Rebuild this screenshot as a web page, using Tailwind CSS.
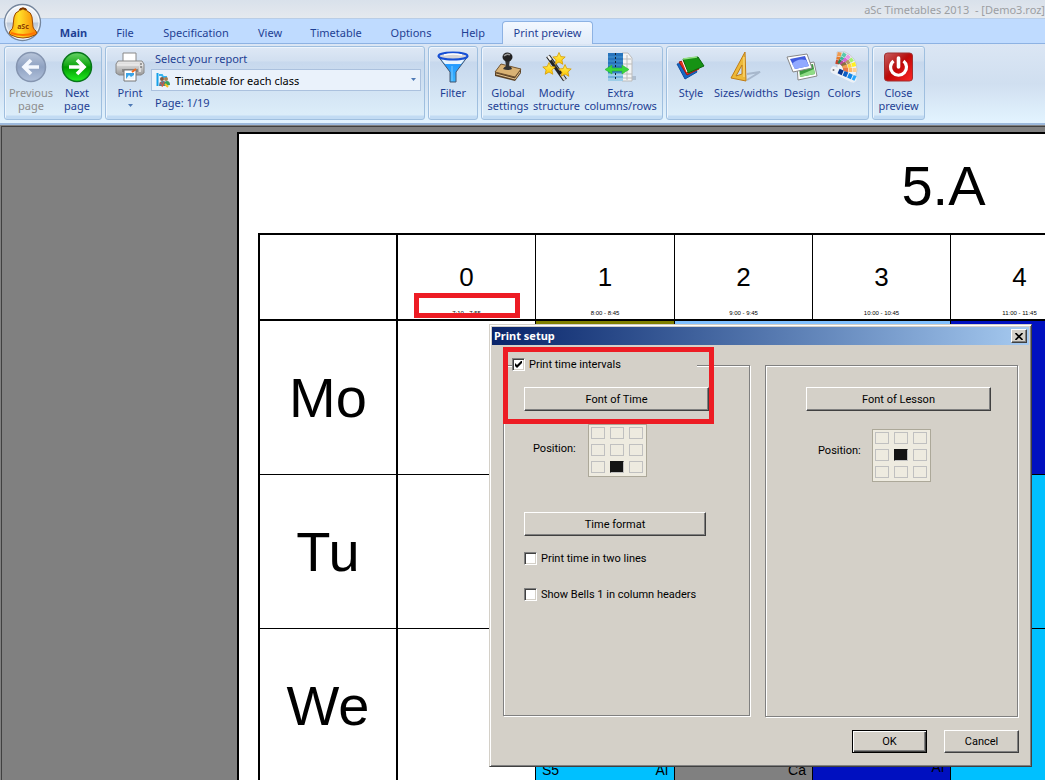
<!DOCTYPE html>
<html lang="en">
<head>
<meta charset="utf-8">
<title>aSc Timetables 2013</title>
<script src="https://cdn.jsdelivr.net/npm/@tailwindcss/browser@4"></script>
</head>
<body class="h-screen overflow-hidden flex flex-col bg-[#808080] font-['Noto_Sans',sans-serif] text-[11px] leading-[13px] text-[#1e3f94]">

<header class="relative shrink-0">
  <div class="h-[19px] bg-linear-to-b from-[#d9e1eb] to-[#e5e9ee] border-b border-[#b9cde6] flex justify-end items-center">
    <h1 class="shrink-0 whitespace-pre text-[#9c9fa3]">aSc Timetables 2013  - [Demo3.roz]</h1>
  </div>
  <nav class="h-[25px] bg-[#bfdbff] border-b border-[#8db2e3] flex pl-[50px] relative" aria-label="Ribbon tabs">
    <a href="#" class="w-[47px] text-center leading-[28px] font-bold">Main</a>
    <a href="#" class="w-[56px] text-center leading-[28px]">File</a>
    <a href="#" class="w-[86px] text-center leading-[28px]">Specification</a>
    <a href="#" class="w-[62px] text-center leading-[28px]">View</a>
    <a href="#" class="w-[70px] text-center leading-[28px]">Timetable</a>
    <a href="#" class="w-[80px] text-center leading-[28px]">Options</a>
    <a href="#" class="w-[44px] text-center leading-[28px]">Help</a>
    <a href="#" class="w-[91px] ml-[7px] mt-[2px] h-[23px] text-center leading-[22px] rounded-t border border-b-0 border-[#8db2e3] bg-linear-to-b from-[#f3f8ff] to-[#e1ebf8]">Print preview</a>
  </nav>
  <button aria-label="Application menu" class="absolute left-[3px] top-[3px]">
    <svg width="40" height="40" viewBox="0 0 40 40">
      <defs>
        <linearGradient id="orb" x2="0" y2="1"><stop stop-color="#f7f9fc"/><stop offset=".48" stop-color="#dfe5ed"/><stop offset=".52" stop-color="#bcc8d8"/><stop offset="1" stop-color="#f2f7ff"/></linearGradient>
        <linearGradient id="bell"><stop stop-color="#ffa000"/><stop offset=".35" stop-color="#ffe02a"/><stop offset="1" stop-color="#f88000"/></linearGradient>
      </defs>
      <circle cx="19.500" cy="19.500" r="18" fill="url(#orb)" stroke="#75869d" stroke-width="1.300"/>
      <circle cx="19.500" cy="19.500" r="16.500" fill="none" stroke="#fff" opacity=".8"/>
      <path d="M16 8q0-3 4-3t4 3q4 1 5 6l1 10q1 3 3 4 2 3-1 4-6 3-12 3T8 32q-3-1-1-4 3-2 3-5l1-9q1-5 5-6z" fill="url(#bell)" stroke="#9b4a00"/>
      <path d="M8 30q12 4 24 0" fill="none" stroke="#ff7200" stroke-width="2"/>
      <path d="M17 7q3-3 6 0" stroke="#7c3500" stroke-width="2" fill="none"/>
      <text x="20" y="26" text-anchor="middle" font-family="Noto Sans" font-weight="bold" font-size="7" fill="#8c3c00">aSc</text>
    </svg>
  </button>

  <div class="h-[81px] pt-[2px] pl-[4px] pb-[3px] bg-linear-to-b from-[#dbe6f4] via-[#d0dff0] to-[#e3f4ff] border-b-2 border-[#9cb9dc] flex gap-[3px] items-stretch">

    <section class="w-[98px] rounded-[3px] border border-[#9fbfdf] bg-[linear-gradient(#dee8f5_0,#d1dff0_14px,#c7d8ed_15px,#dcedf9_68px,#c2dbf3_69px)] shadow-[inset_1px_1px_#eef5fd] flex pt-[3px]">
      <button class="w-[52px] flex flex-col items-center text-[#8d8d8d]">
        <svg width="32" height="34" viewBox="0 0 32 34"><defs><linearGradient id="pg" x2="0" y2="1"><stop stop-color="#b8c5da"/><stop offset=".5" stop-color="#8fa2c2"/><stop offset="1" stop-color="#b2c2dc"/></linearGradient></defs><circle cx="16" cy="17" r="14.500" fill="url(#pg)" stroke="#8595b0" stroke-width="1.500"/><path d="M24 17H9m7-7-7 7 7 7" fill="none" stroke="#f4f8fe" stroke-width="3.600"/></svg>
        <span class="mt-[2px]">Previous<br>page</span>
      </button>
      <button class="w-[40px] flex flex-col items-center">
        <svg width="32" height="34" viewBox="0 0 32 34"><defs><linearGradient id="ng" x2="0" y2="1"><stop stop-color="#66d366"/><stop offset=".45" stop-color="#12a712"/><stop offset=".5" stop-color="#009a00"/><stop offset="1" stop-color="#24ef24"/></linearGradient></defs><circle cx="16" cy="17" r="14.500" fill="url(#ng)" stroke="#08751b" stroke-width="1.500"/><path d="M8 17h15m-7-7 7 7-7 7" fill="none" stroke="#fff" stroke-width="3.600"/></svg>
        <span class="mt-[2px]">Next<br>page</span>
      </button>
    </section>

    <section class="w-[320px] rounded-[3px] border border-[#9fbfdf] bg-[linear-gradient(#dee8f5_0,#d1dff0_14px,#c7d8ed_15px,#dcedf9_68px,#c2dbf3_69px)] shadow-[inset_1px_1px_#eef5fd] flex pt-[3px]">
      <button class="w-[48px] shrink-0 flex flex-col items-center">
        <svg width="32" height="34" viewBox="0 0 32 34"><defs><linearGradient id="pr" x2="0" y2="1"><stop stop-color="#eee"/><stop offset=".5" stop-color="#c4c4c4"/><stop offset="1" stop-color="#999"/></linearGradient></defs><path d="M9 3h13v9H9z" fill="#fff" stroke="#888"/><path d="M4 11h24l2 3v9l-3 2H5l-3-2v-9z" fill="url(#pr)" stroke="#888"/><path d="M3 15h26" stroke="#f5f5f5"/><path d="M8 19h16v3H8z" fill="#888"/><path d="M10 20h12v11H10z" fill="#fff" stroke="#777"/><path d="M12 23h8v6h-8z" fill="#3ba5e8"/><path d="m12 29 3-4 2 2 3-2v4z" fill="#e8f7ff"/><path d="m18 22 4-3" stroke="#f06a20" stroke-width="2"/><path d="M26 12v10" stroke="#ddd" stroke-width="2"/><path d="M26 14h2m-2 3h2" stroke="#555"/></svg>
        <span class="mt-[2px]">Print</span>
        <svg class="mt-[5px]" width="5" height="3" viewBox="0 0 5 3"><path d="M0 0h5L2.500 3z" fill="#4e79b5"/></svg>
      </button>
      <div class="flex flex-col w-[270px] -ml-[3px]">
        <label for="report" class="ml-[4px] mt-[2px]">Select your report</label>
        <div class="relative mt-[4px] h-[22px]">
          <select id="report" class="appearance-none block w-full h-[22px] pl-[23px] bg-[#eaf2fb] border border-[#abc1de] text-black"><option>Timetable for each class</option></select>
          <svg class="absolute left-[5px] top-[3px] pointer-events-none" width="15" height="16" viewBox="0 0 15 16"><path d="M1.500 1v13" stroke="#15a0e8" stroke-width="2"/><path d="M3 3h3l1 2h3v3" fill="none" stroke="#35b5ef" stroke-width="2"/><circle cx="6" cy="7" r="2" fill="#855a40"/><circle cx="10" cy="7" r="2" fill="#a98050"/><path d="M3 14q0-5 4-5t3 5z" fill="#678"/><path d="M8 14q0-5 3-5t3 4z" fill="#35a060"/><path d="M4 10l3 4m1-4-2 5" stroke="#e25238"/><path d="M9 12l3 3" stroke="#ffc020" stroke-width="2"/></svg>
          <svg class="absolute right-[5px] top-[9px] pointer-events-none" width="5" height="3" viewBox="0 0 5 3"><path d="M0 0h5L2.500 3z" fill="#4e79b5"/></svg>
        </div>
        <p class="ml-[4px] mt-[5px]">Page: 1/19</p>
      </div>
    </section>

    <section class="w-[50px] rounded-[3px] border border-[#9fbfdf] bg-[linear-gradient(#dee8f5_0,#d1dff0_14px,#c7d8ed_15px,#dcedf9_68px,#c2dbf3_69px)] shadow-[inset_1px_1px_#eef5fd] flex pt-[3px]">
      <button class="w-full flex flex-col items-center">
        <svg width="32" height="34" viewBox="0 0 32 34"><defs><linearGradient id="fu" x2="0" y2="1"><stop stop-color="#a8d9ff"/><stop offset=".35" stop-color="#239aff"/><stop offset="1" stop-color="#38b6ff"/></linearGradient></defs><path d="M1 6l12 16v10h6V22L31 6z" fill="url(#fu)" stroke="#44546f"/><path d="M4 9h24l-4 5H8z" fill="#e9f5ff"/><ellipse cx="16" cy="6" rx="14.500" ry="3.500" fill="#d4d4d8" stroke="#164fd5" stroke-width="2"/><path d="M7 5q9-2 18 0" stroke="#fff" stroke-width="1.500" fill="none"/><path d="M15 16v15" stroke="#7ccaff"/></svg>
        <span class="mt-[2px]">Filter</span>
      </button>
    </section>

    <section class="w-[182px] rounded-[3px] border border-[#9fbfdf] bg-[linear-gradient(#dee8f5_0,#d1dff0_14px,#c7d8ed_15px,#dcedf9_68px,#c2dbf3_69px)] shadow-[inset_1px_1px_#eef5fd] flex pt-[3px]">
      <button class="w-[52px] shrink-0 flex flex-col items-center">
        <svg width="32" height="34" viewBox="0 0 32 34"><path d="M3 22v4l20 5 6-8v-4l-6 7z" fill="#5c4327"/><path d="M9 14 3 22l20 5 6-8z" fill="#d9b274" stroke="#715330"/><path d="M4 24l19 5 5-7" fill="none" stroke="#e6c58e"/><path d="M13 9h5l-1 7q3 1 3 3-4 2-9 0 1-2 3-3z" fill="#333"/><ellipse cx="15.500" cy="7" rx="5" ry="4.500" fill="#222"/><path d="M12 6q3-3 6-1" fill="none" stroke="#999" stroke-width="1.500"/></svg>
        <span class="mt-[2px]">Global<br>settings</span>
      </button>
      <button class="w-[45px] shrink-0 flex flex-col items-center">
        <svg width="32" height="34" viewBox="0 0 32 34">
          <defs><linearGradient id="st" x2="0" y2="1"><stop stop-color="#fff45e"/><stop offset="1" stop-color="#ffc400"/></linearGradient><path id="star" d="M0-6.500l1.800 4.100 4.400.4-3.300 2.900.9 4.400L0 3l-3.800 2.300.9-4.400L-6.200-2l4.400-.4z"/></defs>
          <path d="M7 6l17 24" stroke="#222" stroke-width="4.500"/><path d="M7 6l3 4" stroke="#f4f4f4" stroke-width="2.500"/><path d="M20 24l4 6" stroke="#d5d5d5" stroke-width="2.500"/><path d="M11 10l8 11" stroke="#777"/>
          <g fill="url(#st)" stroke="#d69b00" stroke-width=".8"><use href="#star" x="18" y="9"/><use href="#star" x="8" y="19"/><use href="#star" x="24" y="21"/></g>
        </svg>
        <span class="mt-[2px]">Modify<br>structure</span>
      </button>
      <button class="w-[83px] shrink-0 flex flex-col items-center">
        <svg width="32" height="34" viewBox="0 0 32 34"><path d="M20 26h11v4H20z" fill="#9baabd" opacity=".6"/><path d="M17 3h6l4 5v23H17z" fill="#f5f5f5" stroke="#bbb"/><path d="M17 9h9m-9 5h10m-10 10h10m-10 4h10M22 5v25" stroke="#bbb"/><path d="M3 3h15v28H3z" fill="#2874bc"/><path d="M3 23h15v8H3z" fill="#9dcde7"/><path d="M3 7h15M3 11h15m-15 4h15m-15 8h15m-15 4h15" stroke="#4496d1"/><path d="M10.500 3v28" stroke="#123" stroke-width="1" stroke-dasharray="2"/><path d="M0 19.500l7-4.500v3h10v-3l7 4.500-7 4.500v-3H7v3z" fill="#39d83b" stroke="#2cb03a" stroke-width=".6"/></svg>
        <span class="mt-[2px]">Extra<br>columns/rows</span>
      </button>
    </section>

    <section class="w-[203px] rounded-[3px] border border-[#9fbfdf] bg-[linear-gradient(#dee8f5_0,#d1dff0_14px,#c7d8ed_15px,#dcedf9_68px,#c2dbf3_69px)] shadow-[inset_1px_1px_#eef5fd] flex pt-[3px]">
      <button class="w-[48px] shrink-0 flex flex-col items-center">
        <svg width="32" height="34" viewBox="0 0 32 34"><path d="M2 14l8 15 12-7-6-10z" fill="#1567c4" stroke="#0d4da0"/><path d="M4 12l8 13 12-6-6-11z" fill="#e5311d" stroke="#a11610"/><path d="M8 9l15-2 6 9-16 7z" fill="#169214" stroke="#08650a"/><path d="M8 9l14-2" stroke="#94df83" stroke-width="1.500"/><path d="M7 10l5 12" stroke="#fff"/></svg>
        <span class="mt-[2px]">Style</span>
      </button>
      <button class="w-[62px] shrink-0 flex flex-col items-center">
        <svg width="32" height="34" viewBox="0 0 32 34"><path d="M17 30l13-8-13 2" fill="none" stroke="#8394aa" stroke-width="2" opacity=".5"/><path fill-rule="evenodd" d="M15 2L1 28l15 3zM12 15v9l-6 2z" fill="#edb938" stroke="#bf7c16"/><path d="M14 7v20" stroke="#ffe28c"/></svg>
        <span class="mt-[2px]">Sizes/widths</span>
      </button>
      <button class="w-[50px] shrink-0 flex flex-col items-center">
        <svg width="32" height="34" viewBox="0 0 32 34"><path d="M11 15l17-3 3 14-19 4z" fill="#fff" stroke="#888"/><path d="M13 17l14-3 2 10-15 3z" fill="#3c9a3f"/><path d="M14 25l14-6 1 5-15 3z" fill="#8fdc86"/><path d="M1 7l20-3 5 14-19 4z" fill="#fff" stroke="#888"/><path d="M4 9l15-3 4 10-14 3z" fill="#415cdd"/><path d="M6 14q5-6 14-4l3 6-14 3z" fill="#91a9ff"/></svg>
        <span class="mt-[2px]">Design</span>
      </button>
      <button class="w-[34px] shrink-0 flex flex-col items-center">
        <svg width="32" height="34" viewBox="0 0 32 34">
          <path d="M9 20V2h8q12 5 12 18l-2 10z" fill="#eef1f5" stroke="#b9bec6" stroke-width=".7"/>
          <g stroke-width="4">
            <g transform="translate(8 20) rotate(-78)"><path d="M6 0h4" stroke="#c8452c"/><path d="M10.500 0h3" stroke="#e87a2c"/><path d="M14 0h4" stroke="#ee9a50"/></g>
            <g transform="translate(8 20) rotate(-62)"><path d="M7 0h4" stroke="#208a5c"/><path d="M11.500 0h3" stroke="#3bb79c"/><path d="M15 0h4" stroke="#5cc8ae"/></g>
            <g transform="translate(8 20) rotate(-47)"><path d="M7 0h4" stroke="#c0489c"/><path d="M11.500 0h4" stroke="#da66d8"/><path d="M16 0h3.500" stroke="#e89ae4"/></g>
            <g transform="translate(8 20) rotate(-33)"><path d="M7 0h5" stroke="#8a7040"/><path d="M12.500 0h3.500" stroke="#b59a64"/><path d="M16.500 0h3.500" stroke="#a4f06c"/></g>
            <g transform="translate(8 20) rotate(-17)"><path d="M7 0h5" stroke="#f2a050"/><path d="M12.500 0h3.500" stroke="#ffd240"/><path d="M16.500 0h4" stroke="#fff020"/></g>
            <g transform="translate(8 20) rotate(0)"><path d="M7 0h5" stroke="#e87848"/><path d="M12.500 0h3.500" stroke="#ffb868"/><path d="M16.500 0h4" stroke="#ffce8c"/></g>
            <path d="M6 20l19 9" stroke="#eef2f7" stroke-width="7" stroke-linecap="round"/>
            <g transform="translate(6 19) rotate(24)" stroke-width="5"><path d="M5 0h4.500" stroke="#08358f"/><path d="M10.500 0h4" stroke="#0c5cc4"/><path d="M15.500 0h4" stroke="#1286e8"/><path d="M20.500 0h3" stroke="#28a8ff"/></g>
            <circle cx="5.500" cy="20" r="1" fill="#777"/>
          </g>
        </svg>
        <span class="mt-[2px]">Colors</span>
      </button>
    </section>

    <section class="w-[53px] rounded-[3px] border border-[#9fbfdf] bg-[linear-gradient(#dee8f5_0,#d1dff0_14px,#c7d8ed_15px,#dcedf9_68px,#c2dbf3_69px)] shadow-[inset_1px_1px_#eef5fd] flex pt-[3px]">
      <button class="w-full flex flex-col items-center">
        <svg width="32" height="34" viewBox="0 0 32 34"><defs><linearGradient id="cl" x2="1" y2="1"><stop stop-color="#c86060"/><stop offset=".45" stop-color="#b81010"/><stop offset=".5" stop-color="#c00808"/><stop offset="1" stop-color="#ff2525"/></linearGradient></defs><rect x="1.500" y="3" width="28" height="28" rx="3" fill="url(#cl)" stroke="#a03030"/><path d="M10.500 11a8 8 0 1 0 10 0" fill="none" stroke="#fff" stroke-width="3.200"/><path d="M15.500 8v9" stroke="#fff" stroke-width="3.600" stroke-linecap="round"/></svg>
        <span class="mt-[2px]">Close<br>preview</span>
      </button>
    </section>
  </div>
</header>

<main class="flex-1 min-h-0 overflow-hidden border-l border-t border-[#808080] text-black font-['Liberation_Sans',sans-serif]">
 <div class="border-l border-t border-[#404040] pt-[5px] pl-[235px]">
  <article class="w-[1394px] h-[1000px] bg-white border-2 border-black pl-[19px]">
    <h2 class="h-[99px] text-center text-[56px] leading-[104px]">5.A</h2>
    <table class="table-fixed border-separate border-spacing-0 w-[1383px] border-t-2 border-l-2 border-black text-center">
      <thead>
        <tr class="h-[86px]">
          <td class="w-[138px] border-b-2 border-r-2"></td>
          <th class="w-[138px] p-0 border-b-2 border-r font-normal align-bottom"><div class="text-[26px] leading-[30px]">0</div><div class="mt-[17px] mb-[2px] text-[6px] leading-[8px]">7:10 - 7:55</div></th>
          <th class="w-[139px] p-0 border-b-2 border-r font-normal align-bottom"><div class="text-[26px] leading-[30px]">1</div><div class="mt-[17px] mb-[2px] text-[6px] leading-[8px]">8:00 - 8:45</div></th>
          <th class="w-[138px] p-0 border-b-2 border-r font-normal align-bottom"><div class="text-[26px] leading-[30px]">2</div><div class="mt-[17px] mb-[2px] text-[6px] leading-[8px]">9:00 - 9:45</div></th>
          <th class="w-[138px] p-0 border-b-2 border-r font-normal align-bottom"><div class="text-[26px] leading-[30px]">3</div><div class="mt-[17px] mb-[2px] text-[6px] leading-[8px]">10:00 - 10:45</div></th>
          <th class="w-[138px] p-0 border-b-2 border-r font-normal align-bottom"><div class="text-[26px] leading-[30px]">4</div><div class="mt-[17px] mb-[2px] text-[6px] leading-[8px]">11:00 - 11:45</div></th>
          <td class="border-b-2"></td>
        </tr>
      </thead>
      <tbody>
        <tr class="h-[154px]">
          <th class="p-0 border-b border-r-2 font-normal text-[56px]">Mo</th>
          <td class="border-b border-r"></td>
          <td class="border-b border-r bg-[#808000]"></td>
          <td class="border-b border-r bg-[#80c0ff]" colspan="2"></td>
          <td class="border-b border-r bg-[#0010c0]"></td>
          <td class="border-b"></td>
        </tr>
        <tr class="h-[154px]">
          <th class="p-0 border-b border-r-2 font-normal text-[56px]">Tu</th>
          <td class="border-b border-r"></td>
          <td class="border-b border-r"></td>
          <td class="border-b border-r"></td>
          <td class="border-b border-r"></td>
          <td class="border-b border-r bg-[#00c0ff]"></td>
          <td class="border-b"></td>
        </tr>
        <tr class="h-[154px] text-[14px] leading-[16px]">
          <th class="p-0 border-b border-r-2 font-normal text-[56px]">We</th>
          <td class="border-b border-r"></td>
          <td class="p-0 px-[6px] pb-[4px] border-b border-r bg-[#00c0ff] align-bottom"><div class="flex justify-between"><span>S5</span><span>Al</span></div></td>
          <td class="p-0 px-[6px] pb-[4px] border-b border-r bg-[#808080] align-bottom text-right">Ca</td>
          <td class="p-0 px-[6px] pb-[7px] border-b border-r bg-[#0010c0] align-bottom text-right">Ai</td>
          <td class="border-b border-r bg-[#00c0ff]"></td>
          <td class="border-b"></td>
        </tr>
      </tbody>
    </table>
  </article>
 </div>
</main>

<div class="absolute left-[414px] top-[293px] w-[106px] h-[25px] border-[5px] border-[#ed1c24]"></div>

<div role="dialog" aria-labelledby="dlg" class="absolute left-[489px] top-[324px] w-[543px] h-[443px] bg-[#d4d0c8] border border-t-[#d4d0c8] border-l-[#d4d0c8] border-r-[#404040] border-b-[#404040] shadow-[inset_1px_1px_#fff,inset_-1px_-1px_#808080] p-[2px] text-black flex flex-col font-['Roboto',sans-serif]">
  <div class="h-[18px] shrink-0 flex items-center justify-between bg-linear-to-r from-[#0a246a] to-[#a6caf0] pl-[2px] pr-[2px]">
    <h2 id="dlg" class="text-white font-bold font-['Noto_Sans',sans-serif] pb-[2px]">Print setup</h2>
    <button aria-label="Close" class="w-[16px] h-[14px] bg-[#d4d0c8] border border-t-white border-l-white border-r-[#404040] border-b-[#404040] shadow-[inset_-1px_-1px_#808080] flex items-center justify-center"><svg width="8" height="7" viewBox="0 0 8 7"><path d="M.5 0l7 7m0-7l-7 7" stroke="#000" stroke-width="1.600"/></svg></button>
  </div>
  <div class="flex gap-[15px] pt-[20px] pl-[11px] pr-[10px] items-start">
    <section class="relative w-[247px] h-[351px] border border-[#808080] shadow-[inset_1px_1px_#fff,1px_1px_#fff] pl-[20px]">
      <label class="absolute left-[8px] top-[-10px] w-[185px] h-[17px] flex items-center bg-[#d4d0c8]">
        <input type="checkbox" checked class="appearance-none w-[13px] h-[13px] bg-white border border-t-[#808080] border-l-[#808080] border-r-white border-b-white shadow-[inset_1px_1px_#404040,inset_-1px_-1px_#d4d0c8]">
        <svg class="absolute left-[3px] top-[5px]" width="7" height="7" viewBox="0 0 7 7"><path d="M0 2v3l2 2 5-5V-1L2 4z"/></svg>
        <span class="ml-[4px]">Print time intervals</span>
      </label>
      <button class="block mt-[21px] w-[185px] h-[24px] border border-t-white border-l-white border-r-[#404040] border-b-[#404040] shadow-[inset_-1px_-1px_#808080]">Font of Time</button>
      <div class="flex items-center mt-[13px] ml-[9px]">
        <span class="w-[55px] mb-[5px]">Position:</span>
        <div class="w-[59px] h-[53px] bg-[#eeebe0] border border-[#aca899] grid grid-cols-[14px_14px_14px] grid-rows-[12px_12px_12px] gap-x-[5px] gap-y-[5px] pl-[2px] pt-[2px]">
          <button aria-label="Top left" class="border border-[#c0c0c0]"></button><button aria-label="Top" class="border border-[#c0c0c0]"></button><button aria-label="Top right" class="border border-[#c0c0c0]"></button>
          <button aria-label="Left" class="border border-[#c0c0c0]"></button><button aria-label="Middle" class="border border-[#c0c0c0]"></button><button aria-label="Right" class="border border-[#c0c0c0]"></button>
          <button aria-label="Bottom left" class="border border-[#c0c0c0]"></button><button aria-label="Bottom" class="border border-t-[#141414] border-l-[#141414] border-r-[#c0c0c0] border-b-[#c0c0c0] bg-[#141414]"></button><button aria-label="Bottom right" class="border border-[#c0c0c0]"></button>
        </div>
      </div>
      <button class="block mt-[35px] w-[182px] h-[24px] border border-t-white border-l-white border-r-[#404040] border-b-[#404040] shadow-[inset_-1px_-1px_#808080]">Time format</button>
      <label class="flex items-center mt-[16px]"><input type="checkbox" class="appearance-none w-[13px] h-[13px] bg-white border border-t-[#808080] border-l-[#808080] border-r-white border-b-white shadow-[inset_1px_1px_#404040,inset_-1px_-1px_#d4d0c8]"><span class="ml-[4px]">Print time in two lines</span></label>
      <label class="flex items-center mt-[23px]"><input type="checkbox" class="appearance-none w-[13px] h-[13px] bg-white border border-t-[#808080] border-l-[#808080] border-r-white border-b-white shadow-[inset_1px_1px_#404040,inset_-1px_-1px_#d4d0c8]"><span class="ml-[4px]">Show Bells 1 in column headers</span></label>
    </section>
    <section class="w-[253px] h-[352px] border border-[#808080] shadow-[inset_1px_1px_#fff,1px_1px_#fff] pl-[40px]">
      <button class="block mt-[21px] w-[185px] h-[24px] border border-t-white border-l-white border-r-[#404040] border-b-[#404040] shadow-[inset_-1px_-1px_#808080]">Font of Lesson</button>
      <div class="flex items-center mt-[18px] ml-[12px]">
        <span class="w-[54px] mb-[11px]">Position:</span>
        <div class="w-[59px] h-[53px] bg-[#eeebe0] border border-[#aca899] grid grid-cols-[14px_14px_14px] grid-rows-[12px_12px_12px] gap-x-[5px] gap-y-[5px] pl-[2px] pt-[2px]">
          <button aria-label="Top left" class="border border-[#c0c0c0]"></button><button aria-label="Top" class="border border-[#c0c0c0]"></button><button aria-label="Top right" class="border border-[#c0c0c0]"></button>
          <button aria-label="Left" class="border border-[#c0c0c0]"></button><button aria-label="Middle" class="border border-t-[#141414] border-l-[#141414] border-r-[#c0c0c0] border-b-[#c0c0c0] bg-[#141414]"></button><button aria-label="Right" class="border border-[#c0c0c0]"></button>
          <button aria-label="Bottom left" class="border border-[#c0c0c0]"></button><button aria-label="Bottom" class="border border-[#c0c0c0]"></button><button aria-label="Bottom right" class="border border-[#c0c0c0]"></button>
        </div>
      </div>
    </section>
  </div>
  <div class="flex justify-end gap-[17px] pt-[13px] pr-[10px]">
    <button class="w-[75px] h-[23px] border border-black shadow-[inset_1px_1px_#fff,inset_-1px_-1px_#404040,inset_-2px_-2px_#808080]">OK</button>
    <button class="w-[75px] h-[23px] border border-t-white border-l-white border-r-[#404040] border-b-[#404040] shadow-[inset_-1px_-1px_#808080]">Cancel</button>
  </div>
</div>
<div class="absolute left-[503px] top-[347px] w-[211px] h-[77px] border-[5px] border-[#ed1c24] pointer-events-none"></div>
</body>
</html>
